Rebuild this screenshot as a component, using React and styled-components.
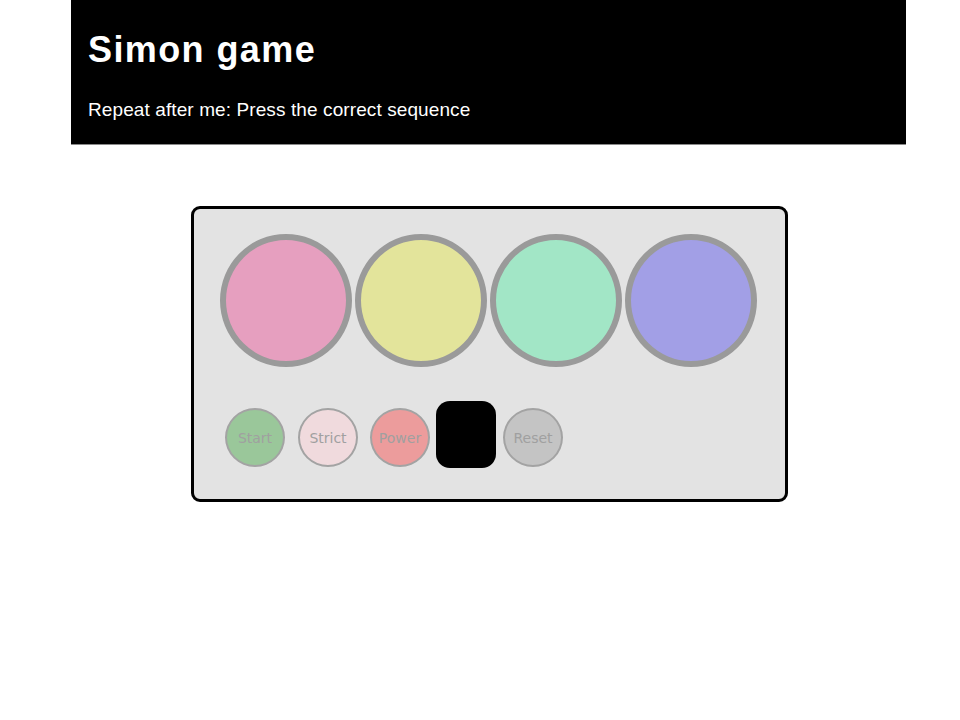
import React from 'react';
import styled, { createGlobalStyle } from 'styled-components';

const GlobalStyle = createGlobalStyle`
  html, body {
    margin: 0;
    padding: 0;
    background: #ffffff;
    font-family: "Liberation Sans", Arial, sans-serif;
  }
`;

const Page = styled.div`
  width: 960px;
  min-height: 720px;
`;

const Header = styled.header`
  margin-left: 71px;
  width: 835px;
  height: 145px;
  box-sizing: border-box;
  padding: 30px 17px 0;
  background: #000;
  color: #fff;
  border-bottom: 1px solid #8a8a8a;
`;

const Title = styled.h1`
  margin: 0;
  font-size: 36px;
  line-height: 40px;
  letter-spacing: 1.4px;
  font-weight: bold;
`;

const Subtitle = styled.p`
  margin: 29px 0 0;
  font-size: 19px;
  line-height: 22px;
  letter-spacing: 0.1px;
`;

const Board = styled.div`
  margin: 61px 0 0 191px;
  width: 597px;
  height: 296px;
  box-sizing: border-box;
  border: 3px solid #000;
  border-radius: 9px;
  background: #e3e3e3;
  padding: 25px 26px 0;
`;

const Pads = styled.div`
  display: flex;
  gap: 3px;
`;

const Pad = styled.div`
  width: 132px;
  height: 133px;
  box-sizing: border-box;
  border-radius: 50%;
  border: 6px solid #9a9a9a;
  background: ${p => p.$color};
`;

const Controls = styled.div`
  display: flex;
  align-items: flex-end;
  margin: 34px 0 0 5px;
`;

const Control = styled.button`
  width: 60px;
  height: 59px;
  box-sizing: border-box;
  margin-right: ${p => p.$gap}px;
  padding: 0;
  border-radius: 50%;
  border: 2px solid #a3a3a3;
  background: ${p => p.$color};
  color: #a0a0a0;
  font-family: "DejaVu Sans", Verdana, sans-serif;
  font-size: 14px;
  cursor: pointer;
`;

const Display = styled.div`
  width: 60px;
  height: 67px;
  margin: 0 7px -1px 0;
  border-radius: 14px;
  background: #000;
`;

const pads = ['#e69fbf', '#e3e49b', '#a2e6c6', '#a29fe6'];

export default function App() {
  return (
    <Page>
      <GlobalStyle />
      <Header>
        <Title>Simon game</Title>
        <Subtitle>Repeat after me: Press the correct sequence</Subtitle>
      </Header>
      <Board>
        <Pads>
          {pads.map(c => <Pad key={c} $color={c} />)}
        </Pads>
        <Controls>
          <Control $color="#9ac79a" $gap={13}>Start</Control>
          <Control $color="#f0dadd" $gap={12}>Strict</Control>
          <Control $color="#ec9c9c" $gap={6}>Power</Control>
          <Display />
          <Control $color="#c4c4c4" $gap={0}>Reset</Control>
        </Controls>
      </Board>
    </Page>
  );
}
